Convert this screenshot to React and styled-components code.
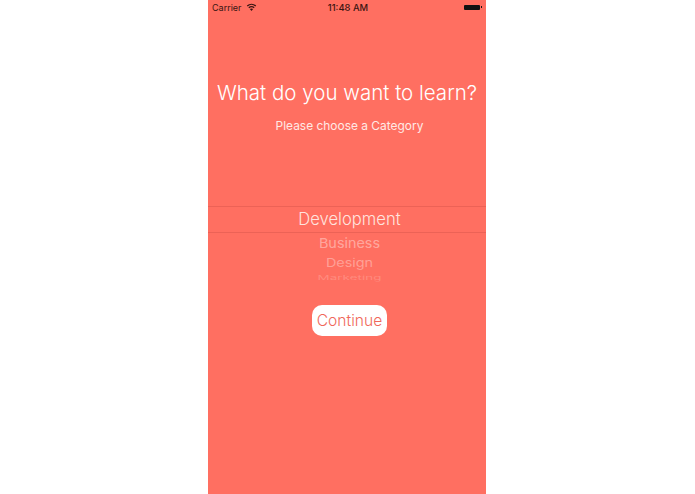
import React from 'react';
import styled, { createGlobalStyle } from 'styled-components';

const Global = createGlobalStyle`
  html, body {
    margin: 0;
    padding: 0;
    background: #fff;
    font-family: Inter, "Liberation Sans", sans-serif;
  }
`;

const Page = styled.div`
  width: 695px;
  height: 494px;
  display: flex;
  justify-content: center;
  overflow: hidden;
`;

const Phone = styled.div`
  width: 278px;
  height: 494px;
  margin-right: 1px;
  background: #ff6f61;
  display: flex;
  flex-direction: column;
  align-items: center;
`;

const StatusBar = styled.div`
  width: 100%;
  height: 14px;
  box-sizing: border-box;
  padding: 0 4px;
  display: grid;
  grid-template-columns: 1fr auto 1fr;
  align-items: center;
  color: #3a1512;
  font-size: 9px;
`;

const Carrier = styled.div`
  display: flex;
  align-items: center;
  gap: 4px;
`;

const Clock = styled.div`
  margin-left: 2px;
  font-size: 9.4px;
  font-weight: 500;
`;

const Battery = styled.div`
  justify-self: end;
  display: flex;
  align-items: center;
  gap: 1px;
`;

const BatteryBody = styled.div`
  width: 16px;
  height: 5px;
  background: #111;
  border-radius: 1px;
`;

const BatteryCap = styled.div`
  width: 1px;
  height: 2px;
  background: #111;
`;

const Title = styled.h1`
  margin: 64px 0 0;
  font-size: 20.5px;
  line-height: 30px;
  font-weight: 350;
  color: #fff;
  white-space: nowrap;
`;

const Subtitle = styled.p`
  margin: 10px 0 0 5px;
  font-size: 11.95px;
  line-height: 16px;
  font-weight: 400;
  color: #ffe9e5;
`;

const Picker = styled.div`
  width: 100%;
  margin-top: 72px;
  display: flex;
  flex-direction: column;
  align-items: center;
`;

const Selected = styled.div`
  width: 100%;
  height: 27px;
  box-sizing: border-box;
  padding-left: 5px;
  border-top: 1px solid #ec6256;
  border-bottom: 1px solid #ec6256;
  text-align: center;
  font-size: 16.6px;
  line-height: 25px;
  font-weight: 350;
  color: #ffe4df;
`;

const Option = styled.div`
  margin-left: 5px;
  height: ${p => p.$height}px;
  line-height: ${p => p.$height}px;
  font-size: ${p => p.$size}px;
  color: rgba(255, 255, 255, ${p => p.$alpha});
  transform: scaleY(${p => p.$squash});
  white-space: nowrap;
`;

const ContinueButton = styled.button`
  margin: 23px 0 0 5px;
  width: 75px;
  height: 31px;
  padding: 0;
  border: none;
  border-radius: 10px;
  background: #fff;
  color: #f0675a;
  font-family: inherit;
  font-size: 15.6px;
  font-weight: 350;
`;

const Wifi = () => (
  <svg width="11" height="8" viewBox="0 0 11 8" fill="#3a1512">
    <path d="M5.5 8 3.9 6.1a2.4 2.4 0 0 1 3.2 0L5.5 8Z" />
    <path d="M3.2 5.3 2.4 4.3a4.7 4.7 0 0 1 6.2 0l-.8 1a3.5 3.5 0 0 0-4.6 0Z" />
    <path d="M1.7 3.5.8 2.5a7.1 7.1 0 0 1 9.4 0l-.9 1a5.8 5.8 0 0 0-7.6 0Z" />
  </svg>
);

export default function App() {
  return (
    <Page>
      <Global />
      <Phone>
        <StatusBar>
          <Carrier>
            Carrier
            <Wifi />
          </Carrier>
          <Clock>11:48 AM</Clock>
          <Battery>
            <BatteryBody />
            <BatteryCap />
          </Battery>
        </StatusBar>
        <Title>What do you want to learn?</Title>
        <Subtitle>Please choose a Category</Subtitle>
        <Picker>
          <Selected>Development</Selected>
          <Option $height={19} $size={14.4} $alpha={0.4} $squash={0.95}>Business</Option>
          <Option $height={21} $size={14.4} $alpha={0.35} $squash={0.8}>Design</Option>
          <Option $height={9} $size={13.5} $alpha={0.2} $squash={0.5}>Marketing</Option>
        </Picker>
        <ContinueButton>Continue</ContinueButton>
      </Phone>
    </Page>
  );
}
